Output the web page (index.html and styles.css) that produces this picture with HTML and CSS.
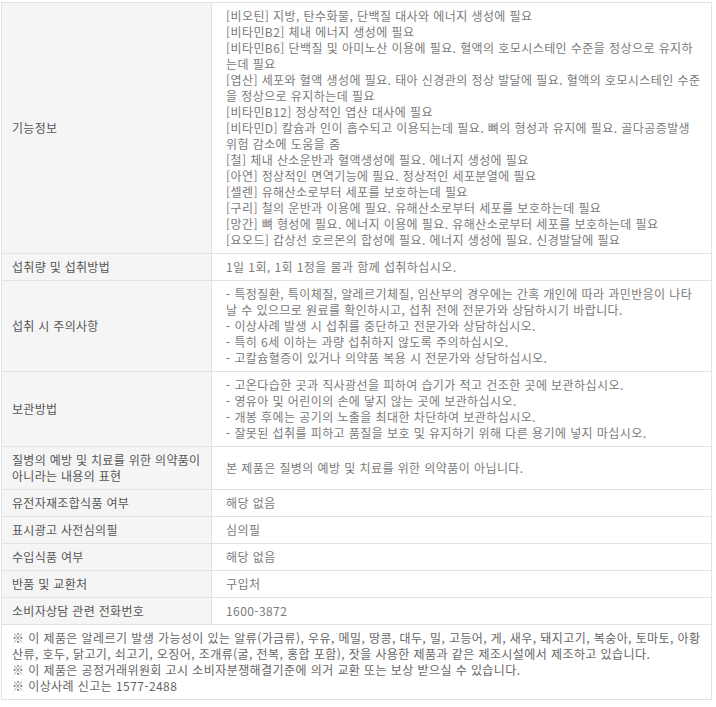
FILE: index.html
```html
<!DOCTYPE html>
<html lang="ko">
<head>
<meta charset="utf-8">
<link rel="stylesheet" href="styles.css">
</head>
<body>
<table class="info">
  <tr>
    <th>기능정보</th>
    <td>[비오틴] 지방, 탄수화물, 단백질 대사와 에너지 생성에 필요<br>
[비타민B2] 체내 에너지 생성에 필요<br>
[비타민B6] 단백질 및 아미노산 이용에 필요. 혈액의 호모시스테인 수준을 정상으로 유지하는데 필요<br>
[엽산] 세포와 혈액 생성에 필요. 태아 신경관의 정상 발달에 필요. 혈액의 호모시스테인 수준을 정상으로 유지하는데 필요<br>
[비타민B12] 정상적인 엽산 대사에 필요<br>
[비타민D] 칼슘과 인이 흡수되고 이용되는데 필요. 뼈의 형성과 유지에 필요. 골다공증발생 위험 감소에 도움을 줌<br>
[철] 체내 산소운반과 혈액생성에 필요. 에너지 생성에 필요<br>
[아연] 정상적인 면역기능에 필요. 정상적인 세포분열에 필요<br>
[셀렌] 유해산소로부터 세포를 보호하는데 필요<br>
[구리] 철의 운반과 이용에 필요. 유해산소로부터 세포를 보호하는데 필요<br>
[망간] 뼈 형성에 필요. 에너지 이용에 필요. 유해산소로부터 세포를 보호하는데 필요<br>
[요오드] 갑상선 호르몬의 합성에 필요. 에너지 생성에 필요. 신경발달에 필요</td>
  </tr>
  <tr>
    <th>섭취량 및 섭취방법</th>
    <td>1일 1회, 1회 1정을 물과 함께 섭취하십시오.</td>
  </tr>
  <tr>
    <th>섭취 시 주의사항</th>
    <td>- 특정질환, 특이체질, 알레르기체질, 임산부의 경우에는 간혹 개인에 따라 과민반응이 나타날 수 있으므로 원료를 확인하시고, 섭취 전에 전문가와 상담하시기 바랍니다.<br>
- 이상사례 발생 시 섭취를 중단하고 전문가와 상담하십시오.<br>
- 특히 6세 이하는 과량 섭취하지 않도록 주의하십시오.<br>
- 고칼슘혈증이 있거나 의약품 복용 시 전문가와 상담하십시오.</td>
  </tr>
  <tr>
    <th>보관방법</th>
    <td>- 고온다습한 곳과 직사광선을 피하여 습기가 적고 건조한 곳에 보관하십시오.<br>
- 영유아 및 어린이의 손에 닿지 않는 곳에 보관하십시오.<br>
- 개봉 후에는 공기의 노출을 최대한 차단하여 보관하십시오.<br>
- 잘못된 섭취를 피하고 품질을 보호 및 유지하기 위해 다른 용기에 넣지 마십시오.</td>
  </tr>
  <tr>
    <th>질병의 예방 및 치료를 위한 의약품이 아니라는 내용의 표현</th>
    <td>본 제품은 질병의 예방 및 치료를 위한 의약품이 아닙니다.</td>
  </tr>
  <tr>
    <th>유전자재조합식품 여부</th>
    <td>해당 없음</td>
  </tr>
  <tr>
    <th>표시광고 사전심의필</th>
    <td>심의필</td>
  </tr>
  <tr>
    <th>수입식품 여부</th>
    <td>해당 없음</td>
  </tr>
  <tr>
    <th>반품 및 교환처</th>
    <td>구입처</td>
  </tr>
  <tr>
    <th>소비자상담 관련 전화번호</th>
    <td>1600-3872</td>
  </tr>
  <tr>
    <td class="note" colspan="2">※ 이 제품은 알레르기 발생 가능성이 있는 알류(가금류), 우유, 메밀, 땅콩, 대두, 밀, 고등어, 게, 새우, 돼지고기, 복숭아, 토마토, 아황산류, 호두, 닭고기, 쇠고기, 오징어, 조개류(굴, 전복, 홍합 포함), 잣을 사용한 제품과 같은 제조시설에서 제조하고 있습니다.<br>
※ 이 제품은 공정거래위원회 고시 소비자분쟁해결기준에 의거 교환 또는 보상 받으실 수 있습니다.<br>
※ 이상사례 신고는 1577-2488</td>
  </tr>
</table>
</body>
</html>
```
FILE: styles.css
```css
html, body {
  margin: 0;
  padding: 0;
  background: #ffffff;
}
body {
  padding: 2px 4px 0 1px;
  font-family: "Noto Sans CJK KR", "Noto Sans", sans-serif;
  font-size: 12px;
  line-height: 16px;
  color: #7a7a7a;
  letter-spacing: 0.42px;
}
.info {
  width: 711px;
  border-collapse: collapse;
  table-layout: fixed;
}
.info th,
.info td {
  border: 1px solid #e2e2e2;
  padding: 5px 8px 5px 14px;
  vertical-align: middle;
  text-align: left;
  word-break: break-all;
}
.info th {
  width: 193px;
  padding-left: 10px;
  padding-right: 6px;
  background: #f5f5f5;
  font-weight: normal;
  color: #555555;
  letter-spacing: 0.3px;
}
.info td.note {
  padding-left: 10px;
  color: #666666;
}
```
